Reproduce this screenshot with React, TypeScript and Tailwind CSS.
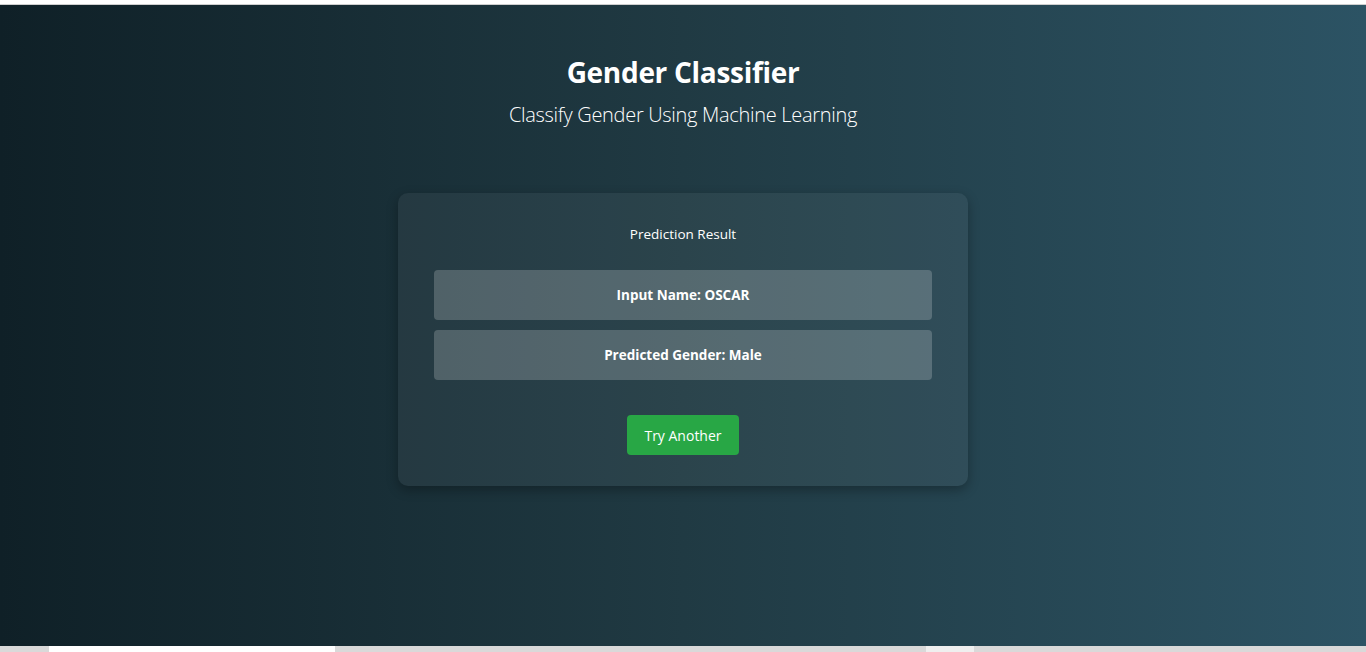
import { useState } from "react";

// Result page of the gender classifier
const App = () => {
  const [name] = useState("OSCAR");
  const [gender] = useState("Male");

  return (
    <div className="h-[652px] w-full flex flex-col overflow-hidden font-['Open_Sans',sans-serif]">
      {/* thin browser strip at the top */}
      <div className="h-[4px] bg-white shrink-0" />
      <div className="h-[1px] bg-[#cfcfcf] shrink-0" />

      <main className="flex-1 bg-gradient-to-r from-[#0f2027] via-[#203a43] to-[#2c5364] flex flex-col items-center text-white">
        <h1 className="mt-[49px] text-[28px] leading-[36px] font-bold tracking-[-0.3px]">
          Gender Classifier
        </h1>
        <p className="mt-[11px] text-[20px] leading-[28px] font-light tracking-[-0.3px]">
          Classify Gender Using Machine Learning
        </p>

        <div className="mt-[64px] w-[570px] rounded-[10px] bg-white/5 shadow-[0_4px_12px_rgba(0,0,0,0.3)] px-[36px] pt-[31px] pb-[31px] flex flex-col items-center">
          <h2 className="text-[13.5px] leading-[20px] font-normal">Prediction Result</h2>

          <div className="mt-[26px] w-full flex flex-col gap-[10px]">
            <div className="h-[50px] rounded-[4px] bg-white/20 flex items-center justify-center text-[13.5px] font-bold">
              Input Name: {name}
            </div>
            <div className="h-[50px] rounded-[4px] bg-white/20 flex items-center justify-center text-[13.5px] font-bold">
              Predicted Gender: {gender}
            </div>
          </div>

          <button className="mt-[35px] w-[112px] h-[40px] rounded-[4px] bg-[#28a745] text-white text-[14px] hover:bg-[#218838]">
            Try Another
          </button>
        </div>
      </main>

      {/* bottom scroll strip */}
      <div className="h-[6px] shrink-0 bg-[#d9d9d9] flex">
        <div className="w-[49px]" />
        <div className="w-[286px] bg-white" />
        <div className="w-[591px]" />
        <div className="w-[48px] bg-[#efefef]" />
      </div>
    </div>
  );
};

export default App;
